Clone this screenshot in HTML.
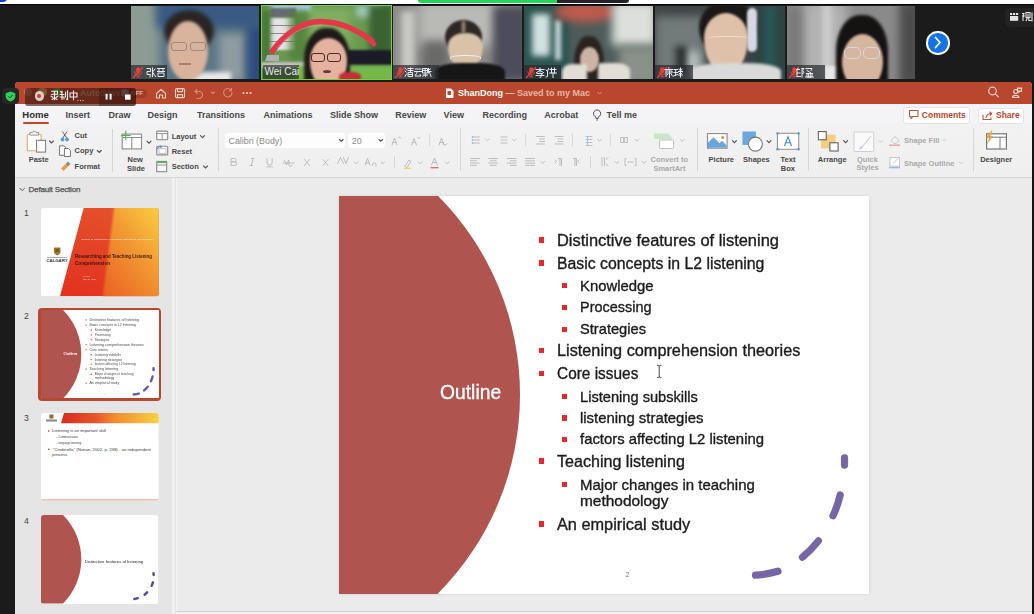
<!DOCTYPE html>
<html><head><meta charset="utf-8">
<style>
*{box-sizing:border-box;margin:0;padding:0}
html,body{width:1034px;height:614px;overflow:hidden;background:#1b1b1b;font-family:"Liberation Sans",sans-serif;position:relative}
.a{position:absolute}
svg{position:absolute;overflow:visible}
.tile{position:absolute;top:5.5px;height:73.5px;overflow:hidden}
.tile .b{position:absolute;border-radius:50%}
.lbl{position:absolute;left:0;bottom:0;height:14px;background:rgba(40,40,40,.75)}
.tab{position:absolute;top:109px;font-size:9px;font-weight:bold;color:#474747;white-space:nowrap;line-height:10px}
.rl{position:absolute;font-size:7.5px;font-weight:bold;color:#484848;white-space:nowrap;line-height:8px}
.rg{color:#a9a9a9}
.sep{position:absolute;width:1px;background:#d6d6d6}
.slide{position:absolute;width:530px;height:398px;background:#fff;overflow:hidden;transform-origin:0 0}
.l1,.l2{position:absolute;white-space:nowrap;color:#1c1c1c;transform-origin:0 0;-webkit-text-stroke:0.35px #1c1c1c}
.l1{font-size:16px;line-height:16px;left:218px}
.l2{font-size:14.5px;line-height:14.5px;left:241px}
#th2 .l1,#th2 .l2{color:#4a4a4a;-webkit-text-stroke:0}
.bl{position:absolute;width:5.4px;height:5.4px;background:#e8262b}
.num{position:absolute;left:24px;font-size:8.6px;color:#444;line-height:9px}
</style></head><body>

<!-- top strip -->
<div class="a" style="left:0;top:0;width:1034px;height:4px;background:#fff"></div>
<div class="a" style="left:0;top:4px;width:1034px;height:1px;background:#050505"></div>
<div class="a" style="left:-3px;top:-3px;width:10px;height:4.5px;background:#0a3fd8;border-radius:0 0 4px 4px"></div>
<div class="a" style="left:417.5px;top:0;width:140px;height:3px;background:#22d65a;border-radius:0 0 0 3px"></div>
<div class="a" style="left:557px;top:0;width:71.5px;height:3px;background:#222326;border-radius:0 0 3px 0"></div>

<!-- video tiles -->
<div class="tile" style="left:130.6px;width:128.6px;top:5.9px;height:72.8px;background:#5c7686">
  <div class="a" style="left:-10px;top:-10px;width:38px;height:95px;background:#8c9c94;filter:blur(4px)"></div>
  <div class="a" style="left:25px;top:-10px;width:115px;height:32px;background:#3a5a84;filter:blur(5px)"></div>
  <div class="a" style="left:88px;top:28px;width:26px;height:48px;background:#8e9ca0;filter:blur(4px)"></div>
  <div class="a" style="left:116px;top:20px;width:20px;height:60px;background:#2c4c7e;filter:blur(4px)"></div>
  <div class="a" style="left:60px;top:66px;width:40px;height:12px;background:#e8e8e8;filter:blur(2px)"></div>
  <div class="b" style="left:33px;top:4px;width:50px;height:42px;background:#2a2522;filter:blur(2px)"></div>
  <div class="b" style="left:37px;top:15px;width:40px;height:60px;background:#d9b39c;filter:blur(1.5px)"></div>
  <div class="a" style="left:40px;top:36px;width:16px;height:9px;border:1.2px solid #9a8a80;border-radius:3px;filter:blur(.4px)"></div>
  <div class="a" style="left:59px;top:36px;width:16px;height:9px;border:1.2px solid #9a8a80;border-radius:3px;filter:blur(.4px)"></div>
  <div class="a" style="left:48px;top:57px;width:12px;height:2.5px;background:#b07a70;filter:blur(.6px)"></div>
</div>
<div class="tile" style="left:261px;width:130.6px;top:5.3px;height:74.3px;background:#5a8a48">
  <div class="a" style="left:0;top:0;width:130px;height:60px;background:#6a9a50;filter:blur(3px)"></div>
  <div class="a" style="left:40px;top:2px;width:50px;height:40px;background:#8ab868;filter:blur(5px);opacity:.7"></div>
  <div class="a" style="left:10px;top:-4px;width:40px;height:10px;background:#a7cdea;filter:blur(2px)"></div>
  <div class="a" style="left:95px;top:0;width:25px;height:12px;background:#b8d8e8;filter:blur(3px);opacity:.7"></div>
  <div class="a" style="left:9px;top:3px;width:26px;height:10px;background:#6a6a72;filter:blur(.8px)"></div>
  <div class="a" style="left:8px;top:13px;width:26px;height:32px;background:#e4e4e4;filter:blur(1.2px)"></div>
  <div class="a" style="left:8px;top:20px;width:26px;height:1.2px;background:#8a8a8a"></div>
  <div class="a" style="left:8px;top:28px;width:26px;height:1.2px;background:#8a8a8a"></div>
  <div class="a" style="left:8px;top:36px;width:26px;height:1.2px;background:#8a8a8a"></div>
  <div class="a" style="left:0;top:5px;width:10px;height:55px;background:#4a7a38;filter:blur(2px)"></div>
  <div class="a" style="left:28px;top:6px;width:20px;height:50px;background:#4f7f3a;filter:blur(3px);opacity:.8"></div>
  <div class="a" style="left:108px;top:0;width:24px;height:50px;background:#3a6232;filter:blur(3px)"></div>
  <div class="a" style="left:86px;top:45px;width:45px;height:15px;background:#1c1c28;filter:blur(.8px)"></div>
  <div class="a" style="left:0;top:57px;width:50px;height:6px;background:#c0c0bc;filter:blur(1px)"></div>
  <div class="a" style="left:35px;top:61px;width:100px;height:14px;background:#74b84a;filter:blur(1.5px)"></div>
  <svg style="left:0;top:0" width="131" height="75"><path d="M10 48C24 28 42 16 60 16.5S96 24 112 37" fill="none" stroke="#e33848" stroke-width="5.5"/><path d="M109 33l5 8" stroke="#e33848" stroke-width="4.5"/><path d="M16 43C30 27 45 20 60 20.5" fill="none" stroke="#f59aa5" stroke-width="0.8" opacity=".6"/><path d="M6 50h12v6H4z" fill="#b0b0b0"/></svg>
  <div class="b" style="left:43px;top:23px;width:46px;height:70px;background:#1f1a17;filter:blur(1.5px);border-radius:45% 45% 10% 10%"></div>
  <div class="b" style="left:49px;top:33px;width:37px;height:50px;background:#e6b2a0;filter:blur(1.2px);border-radius:50% 50% 45% 45%/45% 45% 55% 55%"></div>
  <div class="a" style="left:50px;top:48px;width:14px;height:9px;border:1.6px solid #4a2a25;border-radius:3px"></div>
  <div class="a" style="left:66px;top:48px;width:14px;height:9px;border:1.6px solid #4a2a25;border-radius:3px"></div>
  <div class="a" style="left:62px;top:65px;width:8px;height:3px;background:#6a3a35;border-radius:50%;filter:blur(.5px)"></div>
  <div class="a" style="left:78px;top:67px;width:22px;height:10px;background:#c42e34;filter:blur(1px);border-radius:40% 40% 0 0"></div>
  <div class="a" style="left:0;top:0;width:130.6px;height:74.3px;border:1.6px solid #7fcd3a"></div>
</div>
<div class="tile" style="left:392.6px;width:129.9px;top:5.5px;height:73.5px;background:#8c8c8a">
  <div class="a" style="left:25px;top:-5px;width:80px;height:45px;background:#b9b9b6;filter:blur(6px)"></div>
  <div class="a" style="left:8px;top:5px;width:14px;height:60px;background:#c8c8c4;filter:blur(3px)"></div>
  <div class="a" style="left:30px;top:35px;width:25px;height:38px;background:#6a6a68;filter:blur(4px)"></div>
  <div class="a" style="left:100px;top:0;width:35px;height:75px;background:#4c4c5a;filter:blur(4px)"></div>
  <div class="b" style="left:52px;top:14px;width:37px;height:34px;background:#2e2723;filter:blur(1.2px)"></div>
  <div class="b" style="left:55px;top:27px;width:35px;height:37px;background:#d8c3a8;filter:blur(1.2px);border-radius:45% 45% 50% 50%/35% 35% 65% 65%"></div>
  <div class="a" style="left:69px;top:15px;width:3px;height:12px;background:#a89a8a;filter:blur(1.5px)"></div>
  <div class="a" style="left:57px;top:49px;width:31px;height:6px;border:1.3px solid #f2f0ea;border-radius:45%;border-bottom-color:transparent"></div>
  <div class="a" style="left:42px;top:57px;width:70px;height:25px;background:#161616;filter:blur(1.2px);border-radius:35% 35% 0 0"></div>
</div>
<div class="tile" style="left:523.9px;width:129.3px;top:5.7px;height:73.3px;background:#4e5c5a">
  <div class="a" style="left:-5px;top:-5px;width:50px;height:85px;background:#2c5450;filter:blur(3px)"></div>
  <div class="a" style="left:8px;top:8px;width:18px;height:42px;background:#d2e2e2;filter:blur(3px)"></div>
  <div class="a" style="left:31px;top:14px;width:6px;height:40px;background:#c8d8d8;filter:blur(2px)"></div>
  <div class="a" style="left:30px;top:-4px;width:62px;height:20px;background:#c05a4c;filter:blur(4px);border-radius:50%"></div>
  <div class="a" style="left:88px;top:-5px;width:45px;height:45px;background:#dcdfdb;filter:blur(5px)"></div>
  <div class="a" style="left:95px;top:40px;width:40px;height:40px;background:#8a918a;filter:blur(5px)"></div>
  <div class="b" style="left:50px;top:30px;width:30px;height:60px;background:#2b2320;filter:blur(1.5px);border-radius:45% 45% 5% 5%"></div>
  <div class="b" style="left:56px;top:41px;width:19px;height:25px;background:#cdb3a3;filter:blur(1px)"></div>
  <div class="a" style="left:38px;top:58px;width:25px;height:20px;background:#e2ded6;filter:blur(1.5px);border-radius:40% 10% 0 0"></div>
  <div class="a" style="left:74px;top:57px;width:32px;height:20px;background:#e2ded6;filter:blur(1.5px);border-radius:10% 40% 0 0"></div>
</div>
<div class="tile" style="left:654.6px;width:130.2px;top:5.5px;height:73.5px;background:#3e4444">
  <div class="a" style="left:0;top:10px;width:50px;height:65px;background:#737a7a;filter:blur(5px)"></div>
  <div class="a" style="left:25px;top:45px;width:20px;height:25px;background:#b8c0c0;filter:blur(5px)"></div>
  <div class="a" style="left:20px;top:40px;width:12px;height:30px;background:#2e3232;filter:blur(3px)"></div>
  <div class="a" style="left:98px;top:0;width:35px;height:75px;background:#2c4444;filter:blur(4px)"></div>
  <div class="a" style="left:110px;top:0;width:10px;height:75px;background:#2a5858;filter:blur(3px)"></div>
  <div class="b" style="left:44px;top:-6px;width:58px;height:56px;background:#1b1818;filter:blur(1.5px)"></div>
  <div class="b" style="left:49px;top:7px;width:44px;height:62px;background:#dfc0a8;filter:blur(1.2px);border-radius:50% 50% 50% 50%/40% 40% 60% 60%"></div>
  <div class="a" style="left:92px;top:2px;width:10px;height:44px;background:#d8d8e2;filter:blur(1px);border-radius:5px"></div>
  <div class="a" style="left:53px;top:30px;width:40px;height:5px;border-top:1.2px solid #f0e0c8;border-radius:40%"></div>
  <div class="a" style="left:36px;top:57px;width:90px;height:20px;background:#dadada;filter:blur(1.5px);border-radius:40% 40% 0 0"></div>
</div>
<div class="tile" style="left:786.9px;width:128.6px;top:5.5px;height:73.5px;background:#8a8a8a">
  <div class="a" style="left:15px;top:-5px;width:45px;height:80px;background:#b2b2b2;filter:blur(6px)"></div>
  <div class="a" style="left:0;top:0;width:15px;height:75px;background:#7a7a7a;filter:blur(4px)"></div>
  <div class="a" style="left:112px;top:-5px;width:25px;height:85px;background:#4e4e4e;filter:blur(4px)"></div><div class="a" style="left:36px;top:-5px;width:8px;height:80px;background:#d0d0d0;filter:blur(3px)"></div>
  <div class="a" style="left:38px;top:60px;width:18px;height:16px;background:#e8e8e8;filter:blur(1.5px)"></div>
  <div class="b" style="left:49px;top:9px;width:52px;height:80px;background:#151212;filter:blur(1.5px);border-radius:45% 45% 10% 10%"></div>
  <div class="b" style="left:55px;top:28px;width:41px;height:56px;background:#d6b69f;filter:blur(1.2px)"></div>
  <div class="a" style="left:57px;top:41px;width:17px;height:12px;border:1.3px solid #d8d8dc;border-radius:5px"></div>
  <div class="a" style="left:76px;top:41px;width:17px;height:12px;border:1.3px solid #d8d8dc;border-radius:5px"></div>
</div>
<!-- name labels -->
<div class="a" style="left:130.6px;top:65px;width:36px;height:13.7px;background:rgba(40,42,44,.7)"></div>
<div class="a" style="left:262.5px;top:64.8px;width:36px;height:13.9px;background:rgba(36,36,36,.6)"></div>
<div class="a" style="left:392.6px;top:65px;width:46px;height:14px;background:rgba(40,42,44,.7)"></div>
<div class="a" style="left:523.9px;top:65px;width:37px;height:14px;background:rgba(40,42,44,.7)"></div>
<div class="a" style="left:654.6px;top:65px;width:38.5px;height:14px;background:rgba(40,42,44,.7)"></div>
<div class="a" style="left:786.9px;top:65px;width:38.5px;height:14px;background:rgba(40,42,44,.7)"></div>
<div class="a" style="left:264.5px;top:66.3px;font-size:10px;line-height:11px;color:#e8ecf4;white-space:nowrap">Wei Cai</div>
<svg style="left:0;top:0" width="1034" height="614">
  <g transform="translate(0,0)"><rect x="136.2" y="67.3" width="4" height="6.2" rx="2" fill="#e8403a"/><path d="M134.8 71.5a3.4 3.4 0 0 0 6.8 0M138.2 75v1.8M136.3 76.8h3.8" fill="none" stroke="#e8403a" stroke-width="1"/><path d="M133.5 77.5l9-10" stroke="#e8403a" stroke-width="1.3" stroke-linecap="round"/></g>
  <g transform="translate(262,0)"><rect x="136.2" y="67.3" width="4" height="6.2" rx="2" fill="#e8403a"/><path d="M134.8 71.5a3.4 3.4 0 0 0 6.8 0M138.2 75v1.8M136.3 76.8h3.8" fill="none" stroke="#e8403a" stroke-width="1"/><path d="M133.5 77.5l9-10" stroke="#e8403a" stroke-width="1.3" stroke-linecap="round"/></g>
  <g transform="translate(393,0)"><rect x="136.2" y="67.3" width="4" height="6.2" rx="2" fill="#e8403a"/><path d="M134.8 71.5a3.4 3.4 0 0 0 6.8 0M138.2 75v1.8M136.3 76.8h3.8" fill="none" stroke="#e8403a" stroke-width="1"/><path d="M133.5 77.5l9-10" stroke="#e8403a" stroke-width="1.3" stroke-linecap="round"/></g>
  <g transform="translate(524,0)"><rect x="136.2" y="67.3" width="4" height="6.2" rx="2" fill="#e8403a"/><path d="M134.8 71.5a3.4 3.4 0 0 0 6.8 0M138.2 75v1.8M136.3 76.8h3.8" fill="none" stroke="#e8403a" stroke-width="1"/><path d="M133.5 77.5l9-10" stroke="#e8403a" stroke-width="1.3" stroke-linecap="round"/></g>
  <g transform="translate(656,0)"><rect x="136.2" y="67.3" width="4" height="6.2" rx="2" fill="#e8403a"/><path d="M134.8 71.5a3.4 3.4 0 0 0 6.8 0M138.2 75v1.8M136.3 76.8h3.8" fill="none" stroke="#e8403a" stroke-width="1"/><path d="M133.5 77.5l9-10" stroke="#e8403a" stroke-width="1.3" stroke-linecap="round"/></g>
  <g fill="none" stroke="#e4e8f0" stroke-width="1" stroke-linecap="square">
    <!-- 张晋 -->
    <path d="M147 68.5h3.5v3h-3.5v3h3.5l-.5 2.5M152.5 68v8.5M155 69l-2.5 3 3 4.5"/>
    <path d="M157.5 68.5h7M159 68.5v3M163 68.5v3M157.5 71.5h7M158.5 73h5.5v3.5h-5.5z"/>
    <!-- 潘云默 -->
    <path d="M405.5 68.5l1 1M405 71l1 1M405 76.5l1.5-2.5M408 68.5h5M410.5 68v4M408 70.5h5M408.5 72.5h4v4h-4zM408.5 74.5h4"/>
    <path d="M415.5 69h5.5M414.5 71.5h7.5M417.5 71.5l-2.5 4.5h6l-1-1.5"/>
    <path d="M423 68.5h4.5v4.5h-4.5zM423 70.5h4.5M425.2 68.5v6.5M423 75h4.5M423 76.5l1-1M425.5 76.5l.5-1M428.5 68.5v4.5M428.5 70l2-1M428.5 71.5h2.5M429.5 72l1.5 4.5"/>
    <!-- 李烨 -->
    <path d="M536 69.5h8M540 68v4M540 70.5l-3.5 2M540 70.5l3.5 2M537 73.5h6l-2 1.5v2l-1 .5M536 75.5h8"/>
    <path d="M546 70l1 1M548.5 68.5l-1 3M547.5 71v5.5l-1.5.5M550 69.5h6M551.5 68v5M554.5 68v5M549.5 73h7M553 73v4.5"/>
    <!-- 康琰 -->
    <path d="M668.5 68h.5M665 69.5h7.5M666 69.5v7M667 71h5v2h-5M669.5 71v6.5M667 75l1-1M671 74l1.5 2"/>
    <path d="M674 69.5h3.5M675.7 69.5v6M674 72.5h3.5M673.5 76l4-1.5M679 69l1 1.5M682 69l-1 1.5M680.5 68v3M678.5 71.5h4M679 73l1 1M682 73l-1 1M680.5 72v5M678.5 75h4"/>
    <!-- 邱盈 -->
    <path d="M798 68.5l-1.5 1h3M797 70v6.5M797 73h3M797 76.5h3.5M802 68.5h2l-1.5 2 1.5 2-1.5 1M802 68.5v8.5"/>
    <path d="M806 68.5h6l-1 2M807 70.5l4 2.5M806.5 73.5h6M807 74.5v2.5h5v-2.5M808.6 74.5v2.5M810.3 74.5v2.5M805.5 77h8"/>
  </g>
</svg>

<!-- zoom chevron button -->
<div class="a" style="left:926px;top:31px;width:23.5px;height:23.5px;border-radius:50%;background:#fff"></div>
<div class="a" style="left:928px;top:33px;width:19.5px;height:19.5px;border-radius:50%;background:#1473e6"></div>
<svg style="left:0;top:0" width="1034" height="614"><path d="M935.5 37.5L940 42.5L935.5 47.5" fill="none" stroke="#fff" stroke-width="1.8" stroke-linecap="round" stroke-linejoin="round"/></svg>
<!-- view button top right -->
<div class="a" style="left:1005.4px;top:7.8px;width:40px;height:18.9px;border-radius:5px;background:#232323"></div>
<svg style="left:0;top:0" width="1034" height="614">
  <g fill="#e4e4e4"><rect x="1010" y="13" width="2.2" height="2"/><rect x="1013" y="13" width="2.2" height="2"/><rect x="1016" y="13" width="2.2" height="2"/><rect x="1010" y="16" width="8.2" height="4.8"/></g>
  <g fill="none" stroke="#e4e4e4" stroke-width="1.1"><path d="M1022 13.5h2l-1.5 3M1023 15v6M1024.5 15.5l-1.5 1.5M1026 12.5h4v5h-4zM1028 13.5v4M1027.5 17.5l-1.5 3.5M1028.8 17.5v3h2.5M1032 12.5v9"/></g>
</svg>

<!-- POWERPOINT WINDOW -->
<div class="a" style="left:15px;top:82px;width:1017.2px;height:540px;background:#f4f4f6;border-radius:4px 4px 0 0;overflow:hidden">
  <div class="a" style="left:0;top:0;width:1017.2px;height:22px;background:#b8472e"></div>
  <div class="a" style="left:0;top:41.5px;width:1017.2px;height:54px;background:linear-gradient(#f2f2f3,#efeff0)"></div>
</div>
<div class="a" style="left:1032.2px;top:81px;width:2px;height:533px;background:#141414"></div>

<!-- TITLE BAR CONTENT -->
<div class="a" style="left:458px;top:88px;font-size:9px;font-weight:bold;color:#fff;line-height:10px;white-space:nowrap">ShanDong <span style="color:#e9b5a6">— Saved to my Mac</span></div>
<svg style="left:0;top:0" width="1034" height="614">
  <!-- doc icon -->
  <path d="M446 88.5h5l2.5 2.5v7h-7.5z" fill="#fff"/>
  <path d="M447.5 91h3.5v4h-3.5z" fill="#b8472e"/>
  <!-- title icons -->
  <g fill="none" stroke="#f1d3c8" stroke-width="1.1" stroke-linejoin="round" stroke-linecap="round">
    <path d="M156.5 93.5l4.5-4.2 4.5 4.2v4.5h-3v-3h-3v3h-3z"/>
    <rect x="175.5" y="88.6" width="9" height="9" rx="1.2"/>
    <path d="M177.5 88.6v3h5v-3M177.5 97.6v-3h5v3"/>
  </g>
  <g fill="none" stroke="#d58d77" stroke-width="1.1" stroke-linecap="round">
    <path d="M197 89.5l-2 2 2 2M195 91.5h4a3.5 3.5 0 0 1 0 7h-2"/>
    <path d="M211.5 92l1.5 1.5 1.5-1.5"/>
    <path d="M231 90a4.2 4.2 0 1 0 1 2.5M231.5 88.5v2.2h-2.2"/>
  </g>
  <g fill="#f1d3c8"><circle cx="243.5" cy="93" r="1.1"/><circle cx="247" cy="93" r="1.1"/><circle cx="250.5" cy="93" r="1.1"/></g>
  <g fill="none" stroke="#f3d6cc" stroke-width="1.2" stroke-linecap="round">
    <circle cx="992.5" cy="91" r="3.8"/><path d="M995.3 93.8l3 3"/>
    <circle cx="1015.7" cy="91.5" r="2"/><path d="M1012.5 97.5a3.2 2.2 0 0 1 6.4 0z"/>
    <path d="M1017.5 88.2h4v3h-1.5l-1 1v-1h-1.5z"/>
  </g>
</svg>
<!-- traffic lights / autosave behind overlay -->
<div class="a" style="left:23.5px;top:87.5px;width:8.5px;height:8.5px;border-radius:50%;background:#d46a5a"></div>
<div class="a" style="left:38px;top:87.5px;width:8.5px;height:8.5px;border-radius:50%;background:#e8c050"></div>
<div class="a" style="left:52.5px;top:87.5px;width:8.5px;height:8.5px;border-radius:50%;background:#50c040"></div>
<div class="a" style="left:80px;top:88px;font-size:9px;font-weight:bold;color:#d49a88;line-height:10px">AutoSave</div>
<div class="a" style="left:119.5px;top:88.5px;width:27px;height:9px;border-radius:5px;background:#9c3f2a"></div>
<div class="a" style="left:120.5px;top:89px;width:8px;height:8px;border-radius:50%;background:#d8c2bb"></div>
<div class="a" style="left:131px;top:89.5px;font-size:6px;font-weight:bold;color:#e2b5a8;line-height:7px">OFF</div>
<!-- zoom recording overlay -->
<div class="a" style="left:25.4px;top:88px;width:110.2px;height:18px;border-radius:3px;background:rgba(55,22,14,.62)"></div>
<div class="a" style="left:98.6px;top:88px;width:37px;height:18px;border-radius:0 3px 3px 0;background:rgba(40,15,10,.35)"></div>
<div class="a" style="left:34.5px;top:91px;width:9.5px;height:9.5px;border-radius:50%;background:#d9d0cc"></div>
<div class="a" style="left:37.2px;top:93.7px;width:4.2px;height:4.2px;border-radius:50%;background:#e8322c"></div>
<svg style="left:0;top:0" width="1034" height="614">
  <g fill="none" stroke="#f4eeec" stroke-width="1.1" stroke-linecap="round">
    <path d="M51.5 91.2h6v3h-6M54.5 91.2v8.5M51 96l2 1.5M58 96l-2 1.5M52 99.5l2.5-1.5 2.5 1.5"/>
    <path d="M60.5 91.5l1 1.2M62 91v8.5M60 94.5h4M60 97h4v2M65.5 92v5M67.5 90.8v8.8l-1-.6"/>
    <path d="M73.5 90.7v9M70 93h7v4h-7z"/>
  </g>
  <g fill="#e8e0dd"><circle cx="78" cy="100.5" r=".6"/><circle cx="80.5" cy="100.5" r=".6"/><circle cx="83" cy="100.5" r=".6"/></g>
  <rect x="105.6" y="93.8" width="2" height="5.8" fill="#fff"/><rect x="109.6" y="93.8" width="2" height="5.8" fill="#fff"/>
  <rect x="125" y="94.5" width="5.6" height="5.2" fill="#fff"/>
</svg>
<!-- shield -->
<div class="a" style="left:2.2px;top:88px;width:16.8px;height:16px;border-radius:4px;background:#262626"></div>
<svg style="left:0;top:0" width="1034" height="614">
  <path d="M10.5 91.5l4.8 1.8v3.2c0 2.6-2 4-4.8 5-2.8-1-4.8-2.4-4.8-5v-3.2z" fill="#27d25a"/>
  <path d="M8.3 96.3l1.6 1.6 2.9-3" fill="none" stroke="#1d2a1f" stroke-width="1"/>
</svg>

<!-- TABS -->
<div class="tab" style="left:22.3px;top:109.5px;font-size:9.5px;color:#2e2e2e">Home</div>
<div class="a" style="left:22.8px;top:122px;width:26.2px;height:1.8px;border-radius:1px;background:#c4452b"></div>
<div class="tab" style="left:65.5px;top:109.5px">Insert</div>
<div class="tab" style="left:108.6px;top:109.5px">Draw</div>
<div class="tab" style="left:147.6px;top:109.5px">Design</div>
<div class="tab" style="left:197px;top:109.5px">Transitions</div>
<div class="tab" style="left:263.4px;top:109.5px">Animations</div>
<div class="tab" style="left:330.1px;top:109.5px">Slide Show</div>
<div class="tab" style="left:395.2px;top:109.5px">Review</div>
<div class="tab" style="left:443.6px;top:109.5px">View</div>
<div class="tab" style="left:482.4px;top:109.5px">Recording</div>
<div class="tab" style="left:544.2px;top:109.5px">Acrobat</div>
<div class="tab" style="left:606.6px;top:109.5px">Tell me</div>
<svg style="left:0;top:0" width="1034" height="614">
  <path d="M596 118.5v-1.5a3.6 3.6 0 1 1 2.2 0v1.5z M596.3 120h1.6" fill="none" stroke="#555" stroke-width="1"/>
</svg>
<!-- comments / share -->
<div class="a" style="left:903px;top:107.3px;width:67.4px;height:16.7px;border-radius:3px;background:#fff;border:1px solid #e4e4e4"></div>
<div class="a" style="left:921.8px;top:111px;font-size:8.5px;font-weight:bold;color:#b6452c;line-height:9px">Comments</div>
<div class="a" style="left:978px;top:107.5px;width:46.3px;height:16.5px;border-radius:3px;background:#fff;border:1px solid #e4e4e4"></div>
<div class="a" style="left:996px;top:111px;font-size:8.5px;font-weight:bold;color:#b6452c;line-height:9px">Share</div>
<svg style="left:0;top:0" width="1034" height="614">
  <g fill="none" stroke="#c0553b" stroke-width="1.1" stroke-linejoin="round">
    <path d="M909.5 110.5h8.5v6h-5l-2 2v-2h-1.5z"/>
    <path d="M983 114.5v5h8v-2M986 118c.5-3 2.5-4.5 5.5-4.5M989.5 111.8l2.3 1.7-2 2"/>
  </g>
</svg>

<!-- RIBBON LABELS -->
<div class="rl" style="left:28.7px;top:156px">Paste</div>
<div class="rl" style="left:74.6px;top:132.4px">Cut</div>
<div class="rl" style="left:74.6px;top:147.4px">Copy</div>
<div class="rl" style="left:74.6px;top:162.9px">Format</div>
<div class="rl" style="left:127.5px;top:156.2px">New</div>
<div class="rl" style="left:127px;top:164.6px">Slide</div>
<div class="rl" style="left:171.7px;top:132.6px">Layout</div>
<div class="rl" style="left:171.7px;top:147.8px">Reset</div>
<div class="rl" style="left:171.7px;top:162.9px">Section</div>
<div class="a" style="left:225.2px;top:133.2px;width:120.2px;height:14.6px;border-radius:3px;background:#fdfdfd"></div>
<div class="a" style="left:348.3px;top:133.2px;width:37px;height:14.6px;border-radius:3px;background:#fdfdfd"></div>
<div class="a" style="left:228.5px;top:135.5px;font-size:8.9px;color:#8c8c8c;line-height:10px;white-space:nowrap">Calibri (Body)</div>
<div class="a" style="left:351.8px;top:135.5px;font-size:8.9px;color:#8c8c8c;line-height:10px">20</div>
<div class="rl rg" style="left:650.5px;top:156.3px">Convert to</div>
<div class="rl rg" style="left:653.4px;top:164.8px">SmartArt</div>
<div class="rl" style="left:708.6px;top:156.4px">Picture</div>
<div class="rl" style="left:743.1px;top:156.4px">Shapes</div>
<div class="rl" style="left:780.6px;top:156.4px">Text</div>
<div class="rl" style="left:780.8px;top:164.7px">Box</div>
<div class="rl" style="left:817.8px;top:156.4px">Arrange</div>
<div class="rl rg" style="left:857px;top:156.4px">Quick</div>
<div class="rl rg" style="left:856.5px;top:164.4px">Styles</div>
<div class="rl rg" style="left:904px;top:136.8px">Shape Fill</div>
<div class="rl rg" style="left:904px;top:159.6px">Shape Outline</div>
<div class="rl" style="left:980.2px;top:156.3px">Designer</div>
<svg style="left:0;top:0" width="1034" height="614">
  <!-- Paste -->
  <rect x="27.3" y="134.3" width="13.8" height="16.4" rx="1" fill="#fff" stroke="#e2ad5c" stroke-width="1.1"/>
  <path d="M29.8 137.3v-2.6h2.6a1.9 1.9 0 0 1 3.6 0h2.6v2.6z" fill="#f6f6f6" stroke="#8a8a8a" stroke-width="0.9" transform="translate(0,-2.2)"/>
  <rect x="36.6" y="140.3" width="9" height="11.8" fill="#fff" stroke="#777" stroke-width="1"/>
  <!-- Cut -->
  <g fill="none" stroke="#555" stroke-width="0.9"><path d="M62.5 131.5l4.5 7M67 131.5l-4.5 7"/></g>
  <circle cx="62.5" cy="139.5" r="1.9" fill="#5b9bd5"/><circle cx="67" cy="139.5" r="1.9" fill="#5b9bd5"/>
  <!-- Copy -->
  <path d="M59.6 145.8h4.5l1.5 1.5v8h-6z" fill="#fff" stroke="#666" stroke-width="0.9"/>
  <path d="M64.4 148.5h4l2 2v6h-6z" fill="#fff" stroke="#666" stroke-width="0.9"/>
  <!-- Format painter -->
  <path d="M61 168.5l4.5-4.5 2.5 2.5-4.5 4.5z" fill="#ee9a45"/>
  <path d="M65.5 164l2.5-2.5 2.5 2.5-2.5 2.5z" fill="#8c8c8c"/>
  <!-- New slide -->
  <rect x="122.2" y="134.1" width="19.3" height="14.8" fill="#fff" stroke="#8c8c8c" stroke-width="1.1"/>
  <path d="M122.2 137.5h19.3M131.8 137.5v11.4" stroke="#8c8c8c" stroke-width="1.1"/>
  <path d="M125.7 130.8v9.5M121 135.5h9.5" stroke="#4cb050" stroke-width="1.1"/>
  <!-- Layout / Reset / Section -->
  <rect x="156.7" y="131.1" width="11" height="8.6" rx="1" fill="#f6f6f6" stroke="#8c8c8c" stroke-width="1.1"/>
  <path d="M156.7 133.6h11M162.2 133.6v6.1" stroke="#8c8c8c" stroke-width="0.9"/><rect x="158.3" y="134.8" width="2.8" height="3.4" fill="#fff"/><rect x="163.3" y="134.8" width="2.8" height="3.4" fill="#fff"/>
  <rect x="156.7" y="146.3" width="11" height="8.6" rx="1" fill="#f6f6f6" stroke="#8c8c8c" stroke-width="1.1"/>
  <rect x="159" y="148.8" width="7" height="4.5" fill="#fff" stroke="#aaa" stroke-width="0.7"/><path d="M157.3 149.3a3 3 0 0 1 4-2.6M160.2 145.6l1.3 1.1-1.2 1.2" fill="none" stroke="#4a8ed8" stroke-width="1.1"/>
  <rect x="156.7" y="162.5" width="10" height="9.2" fill="#f6f6f6" stroke="#8c8c8c" stroke-width="1.1"/>
  <path d="M156.2 161.5h11" stroke="#5cb85c" stroke-width="1.3"/>
  <path d="M156.7 165h10" stroke="#8c8c8c" stroke-width="0.9"/>
  <!-- chevrons dark -->
  <g fill="none" stroke="#555" stroke-width="1.15" stroke-linecap="round">
    <path d="M49.5 141l2 2 2-2"/><path d="M97.3 150.5l2 2 2-2"/><path d="M147 141.2l2 2 2-2"/>
    <path d="M200.5 135.6l2 2 2-2"/><path d="M203.5 166l2 2 2-2"/>
    <path d="M732.4 140.6l2 2 2-2"/><path d="M767 140.6l2 2 2-2"/><path d="M843.6 140.6l2 2 2-2"/>
    <path d="M339.5 139.5l1.8 1.8 1.8-1.8"/><path d="M379 139.5l1.8 1.8 1.8-1.8"/>
  </g>
  <!-- font group gray icons -->
  <g fill="none" stroke="#b8b8b8" stroke-width="0.9" stroke-linecap="round">
    <path d="M231.5 158.5h3a1.7 1.7 0 0 1 0 3.4h-3zM231.5 161.9h3.4a1.8 1.8 0 0 1 0 3.6h-3.4z"/>
    <path d="M251.5 158.5h2.5M250 165.5h2.5M253 158.5l-1.5 7"/>
    <path d="M267 158.5v4a2.6 2.6 0 0 0 5.2 0v-4M266.6 166.8h6"/>
    <path d="M283 163h11M284.5 160.5l2 4.5 2-4.5M289 160.5v4.5a1.5 1.5 0 0 0 3 0"/>
    <path d="M304.5 159.5l5 6M309.5 159.5l-5 6"/>
    <path d="M323 159.5l5 6M328 159.5l-5 6"/>
    <path d="M337.5 163.5l3-6 3 6M343.5 157.5l2.5 6 2.5-6"/><path d="M354.5 162l1.8 1.8 1.8-1.8"/>
    <path d="M365 165l2.5-6.5 2.5 6.5M366 163h3M372.5 165.5a1.8 1.8 0 1 1 3.5-1.5v2"/><path d="M381 162l1.8 1.8 1.8-1.8"/>
    <path d="M392 145l2.5-7 2.5 7M393 142.5h3M398.5 138l1 -1.2 1 1.2"/>
    <path d="M411.5 145l2.5-6.5 2.5 6.5M412.5 142.7h3M418 137.5l1 1.2 1-1.2"/>
    <path d="M439 145l2.5-7 2.5 7M440 142.5h3"/>
    <path d="M405 166l4-6 2 1.5-4 6z"/><path d="M418.5 162l1.8 1.8 1.8-1.8"/>
    <path d="M431.5 165l3-7 3 7M432.5 162.5h4"/><path d="M445.5 162l1.8 1.8 1.8-1.8"/>
  </g>
  <path d="M404 168.3h7" stroke="#ecd86a" stroke-width="1.4"/>
  <path d="M430.5 167.7h8" stroke="#e07070" stroke-width="1.4"/>
  <path d="M443 142a2 2 0 1 0 4 1.5" stroke="#d7a0d7" stroke-width="0.9" fill="none"/>
  <!-- paragraph group -->
  <g fill="none" stroke="#b8b8b8" stroke-width="0.9" stroke-linecap="round">
    <path d="M472.5 137h7M472.5 140h7M472.5 143h7"/><path d="M485.5 139l1.8 1.8 1.8-1.8"/>
    <path d="M501 137h6M501 140h6M501 143h6"/><path d="M512.5 139l1.8 1.8 1.8-1.8"/>
    <path d="M536.5 136.5h8M539.5 139h5M539.5 141.5h5M536.5 144h8"/>
    <path d="M555 136.5h8M558 139h5M558 141.5h5M555 144h8"/>
    <path d="M586 136.5h6M586 139.5h6M586 142.5h6M586 145.5h6"/><path d="M597.6 139.5l1.8 1.8 1.8-1.8"/>
    <path d="M621 137.5h2.5v5h-2.5zM625 137.5h2.5v5h-2.5z"/><path d="M635 139.5l1.8 1.8 1.8-1.8"/>
    <path d="M470.5 158.5h9M470.5 160.8h6M470.5 163.1h9M470.5 165.4h6"/>
    <path d="M488.7 158.5h9M490.2 160.8h6M488.7 163.1h9M490.2 165.4h6"/>
    <path d="M507.3 158.5h9M510.3 160.8h6M507.3 163.1h9M510.3 165.4h6"/>
    <path d="M525.5 158.5h9M525.5 160.8h9M525.5 163.1h9M525.5 165.4h9"/><path d="M541 161.5l1.8 1.8 1.8-1.8"/>
    <path d="M555 160l1.5 1.5-1.5 1.5M558.5 158.5h3v7M560 158.5v7"/>
    <path d="M573.5 158.5h3v7M575 158.5v7M579 160l-1.5 1.5 1.5 1.5"/>
    <path d="M602 157.5v8.5M604.5 157.5v8.5M608 157.5l-1.5 2M608 166l-1.5-2"/><path d="M615 161.5l1.8 1.8 1.8-1.8"/>
    <path d="M626 158.5h-1v7h1M635 158.5h1v7h-1M628 162h5"/><path d="M642 161.5l1.8 1.8 1.8-1.8"/>
    <path d="M680.5 139.5l1.8 1.8 1.8-1.8"/>
  </g>
  <path d="M472.5 137h.1M472.5 140h.1M472.5 143h.1" stroke="#7fb1e0" stroke-width="1.6" stroke-linecap="round"/>
  <path d="M587.5 136v10" stroke="#8fbde6" stroke-width="0.8"/>
  <path d="M654 133.5h14l5 5.5h-19z" fill="#cfe3c6"/>
  <rect x="659.5" y="140" width="14" height="8.5" rx="1" fill="#fff" stroke="#b8b8b8" stroke-width="0.9"/>
  <!-- Picture -->
  <rect x="707.5" y="133.6" width="19.6" height="14.6" fill="#fff" stroke="#8c8c8c" stroke-width="1.1"/>
  <path d="M708 147.8v-5l5.5-5.5 6 6 2.5-2.5 4.5 4.5v2.5z" fill="#6aa5de"/>
  <circle cx="722.7" cy="137.6" r="1.5" fill="#f0903a"/>
  <!-- Shapes -->
  <rect x="742.4" y="131.5" width="13.5" height="13.4" fill="#6ea6e0"/>
  <circle cx="755.4" cy="144.1" r="7" fill="#fff" stroke="#777" stroke-width="1.1"/>
  <!-- Text box -->
  <rect x="777.4" y="133.3" width="21.3" height="16" fill="#fff" stroke="#8c8c8c" stroke-width="1"/>
  <path d="M784.5 146l3.5-9.5 3.5 9.5M785.7 142.8h4.6" fill="none" stroke="#3f87d4" stroke-width="1.1"/>
  <g fill="#3f87d4"><rect x="776.5" y="132.4" width="2" height="2"/><rect x="797.6" y="132.4" width="2" height="2"/><rect x="776.5" y="148.3" width="2" height="2"/><rect x="797.6" y="148.3" width="2" height="2"/></g>
  <!-- Arrange -->
  <rect x="821" y="134.7" width="14.6" height="13.8" fill="#f3cd84"/>
  <rect x="818.3" y="131.6" width="7.9" height="8.2" fill="#fff" stroke="#555" stroke-width="1"/>
  <rect x="829.9" y="142.8" width="8.2" height="8.2" fill="#fff" stroke="#555" stroke-width="1"/>
  <!-- Quick styles -->
  <rect x="854" y="132" width="19.8" height="19.5" rx="1" fill="#fafafa" stroke="#cfcfcf" stroke-width="1"/>
  <path d="M871 136l-8 10" stroke="#c8c8c8" stroke-width="1"/><path d="M859 149.5c.5-2.5 2-4 4-3.5 0 2-2 3.5-4 3.5z" fill="#b9d3ee"/>
  <g fill="none" stroke="#c8c8c8" stroke-width="0.9" stroke-linecap="round"><path d="M878.8 140.5l1.8 1.8 1.8-1.8"/><path d="M942 139.2l1.8 1.8 1.8-1.8"/><path d="M959 162l1.8 1.8 1.8-1.8"/></g>
  <!-- shape fill / outline -->
  <path d="M891 140.5l4-4 4 4-3 3h-2z" fill="none" stroke="#c0c0c0" stroke-width="0.9"/>
  <path d="M889 145.2h11" stroke="#e8a0a0" stroke-width="1.4"/>
  <rect x="890" y="157.6" width="9.5" height="8.5" fill="#fff" stroke="#c0c0c0" stroke-width="0.9"/>
  <path d="M893 163.5l5-5" stroke="#9bb9e0" stroke-width="0.9"/>
  <path d="M889 167.6h11" stroke="#9bb9e0" stroke-width="1.4"/>
  <!-- Designer -->
  <rect x="986.6" y="133.8" width="19.8" height="15.2" fill="#fff" stroke="#777" stroke-width="1.2"/>
  <path d="M986.6 137.2h19.8M1000 137.2v11.8" stroke="#777" stroke-width="1"/>
  <path d="M991.5 130.5l-5.5 7h3.3l-2.5 6.8 6.5-8.3h-3.3l2.5-5.5z" fill="#f0a336"/>
</svg>
<div class="sep" style="left:112px;top:129px;height:42.7px"></div>
<div class="sep" style="left:428.8px;top:134px;height:12px"></div>
<div class="sep" style="left:393.8px;top:156px;height:12px"></div>
<div class="sep" style="left:525.1px;top:134px;height:12px"></div>
<div class="sep" style="left:572.3px;top:134px;height:12px"></div>
<div class="sep" style="left:609.7px;top:134px;height:12px"></div>
<div class="sep" style="left:589.9px;top:156px;height:12px"></div>
<svg style="left:0;top:0" width="1034" height="614"><path d="M597.5 92l2 2 2-2" fill="none" stroke="#e0a090" stroke-width="0.9"/></svg>
<div class="sep" style="left:217.6px;top:128.3px;height:43px"></div>
<div class="sep" style="left:459.8px;top:128.3px;height:43px"></div>
<div class="sep" style="left:696.8px;top:128.3px;height:43px"></div>
<div class="sep" style="left:808.3px;top:128.3px;height:43px"></div>
<div class="sep" style="left:972.6px;top:128.3px;height:43px"></div>

<!-- ribbon bottom border -->
<div class="a" style="left:15px;top:176.5px;width:1017px;height:1.5px;background:#d6d6d8"></div>
<!-- left panel -->
<div class="a" style="left:15px;top:178px;width:157.2px;height:436px;background:#e5e5e5"></div>
<div class="a" style="left:172.2px;top:178px;width:3px;height:436px;background:#f1f0f3"></div>
<div class="a" style="left:175.2px;top:178px;width:1.3px;height:436px;background:#e3e3e3"></div>
<!-- left panel content -->
<svg style="left:0;top:0" width="1034" height="614"><path d="M19.6 188l2.6 2.6 2.6-2.6" fill="none" stroke="#555" stroke-width="1"/></svg>
<div class="a" style="left:28.5px;top:185px;font-size:8px;color:#505050;line-height:9px;white-space:nowrap;letter-spacing:-0.17px;-webkit-text-stroke:0.25px #505050">Default Section</div>
<div class="num" style="top:208.8px">1</div>
<div class="num" style="top:311.5px">2</div>
<div class="num" style="top:414.2px">3</div>
<div class="num" style="top:517px">4</div>
<!-- thumb 1 -->
<svg style="left:41px;top:207.8px" width="117.7" height="88.2">
  <defs>
    <linearGradient id="t1a" x1="0" y1="1" x2="0.4" y2="0"><stop offset="0" stop-color="#e3301f"/><stop offset="1" stop-color="#e4502a"/></linearGradient>
    <linearGradient id="t1b" x1="0.1" y1="1" x2="0.9" y2="0"><stop offset="0" stop-color="#ea5f25"/><stop offset="0.55" stop-color="#f29a32"/><stop offset="1" stop-color="#f9d342"/></linearGradient>
    <clipPath id="t1c"><rect width="117.7" height="88.2" rx="2.5"/></clipPath>
    <filter id="t1f" x="-20%" y="-20%" width="140%" height="140%"><feGaussianBlur stdDeviation="1.2"/></filter>
  </defs>
  <g clip-path="url(#t1c)">
    <rect width="117.7" height="88.2" fill="#fff"/>
    <path d="M42.7 0H118V88.2H19z" fill="url(#t1a)"/>
    <path d="M73.7 -5H125V95H61z" fill="url(#t1b)" filter="url(#t1f)"/>
    <path d="M13 39.5h6.5v4.5c0 1.5-1.5 2.8-3.25 3.5-1.75-.7-3.25-2-3.25-3.5z" fill="#a0762c"/>
    <rect x="14.5" y="41" width="3.5" height="3" fill="#6a3a1a" opacity=".6"/>
    <rect x="6" y="49.3" width="20" height=".6" fill="#777"/>
    <text x="5.5" y="54.3" font-family="Liberation Sans" font-size="4.4" font-weight="bold" fill="#333" textLength="21" lengthAdjust="spacingAndGlyphs">CALGARY</text>
    <text x="40.5" y="32.3" font-family="Liberation Sans" font-size="2.4" fill="#fff" opacity=".85" textLength="71" lengthAdjust="spacingAndGlyphs">School of Languages, Linguistics, Literatures and Cultures</text>
    <text x="34" y="50.3" font-family="Liberation Sans" font-size="4.6" font-weight="bold" fill="#2a1008" opacity=".9" textLength="77" lengthAdjust="spacingAndGlyphs">Researching and Teaching Listening</text>
    <text x="34" y="56.6" font-family="Liberation Sans" font-size="4.6" font-weight="bold" fill="#2a1008" opacity=".9" textLength="35" lengthAdjust="spacingAndGlyphs">Comprehension</text>
    <text x="42" y="69" font-family="Liberation Sans" font-size="2" fill="#fff" opacity=".8">Wei Cai</text>
    <text x="42" y="71.5" font-family="Liberation Sans" font-size="2" fill="#fff" opacity=".8">June 20, 2022</text>
  </g>
</svg>
<!-- thumb 2 (selected) -->
<div class="a" style="left:38px;top:307.6px;width:123.2px;height:93.4px;border:3px solid #b9472e;border-radius:4px;background:#fff"></div>
<div class="a" style="left:40.6px;top:310.3px;width:118px;height:88.1px;overflow:hidden;border-radius:1px">
<div class="slide" id="th2" style="left:0;top:0;transform:scale(0.22264)">
  <svg style="left:0;top:0" width="530" height="398"><circle cx="-101" cy="198.7" r="282" fill="#b05450"/></svg>
  <div class="a" style="left:101.3px;top:187px;font-size:19.6px;line-height:19.6px;color:#fff;white-space:nowrap;-webkit-text-stroke:0.3px #fff;transform:scaleX(0.985);transform-origin:0 0">Outline</div>
  <div class="bl" style="left:199.7px;top:41.9px"></div><div class="l1" style="top:37.2px;transform:scaleX(1.027)">Distinctive features of listening</div>
  <div class="bl" style="left:199.7px;top:64.7px"></div><div class="l1" style="top:60.0px;transform:scaleX(0.988)">Basic concepts in L2 listening</div>
  <div class="bl" style="left:222.6px;top:87.4px"></div><div class="l2" style="top:83.0px;transform:scaleX(1.025)">Knowledge</div>
  <div class="bl" style="left:222.6px;top:109.2px"></div><div class="l2" style="top:104.8px;transform:scaleX(0.996)">Processing</div>
  <div class="bl" style="left:222.6px;top:131.0px"></div><div class="l2" style="top:126.6px;transform:scaleX(1.011)">Strategies</div>
  <div class="bl" style="left:199.7px;top:152.5px"></div><div class="l1" style="top:147.9px;transform:scaleX(1.017)">Listening comprehension theories</div>
  <div class="bl" style="left:199.7px;top:175.5px"></div><div class="l1" style="top:170.9px;transform:scaleX(0.963)">Core issues</div>
  <div class="bl" style="left:222.6px;top:198.4px"></div><div class="l2" style="top:194.1px;transform:scaleX(1.009)">Listening subskills</div>
  <div class="bl" style="left:222.6px;top:219.9px"></div><div class="l2" style="top:215.6px;transform:scaleX(1.028)">listening strategies</div>
  <div class="bl" style="left:222.6px;top:241.1px"></div><div class="l2" style="top:236.8px;transform:scaleX(1.025)">factors affecting L2 listening</div>
  <div class="bl" style="left:199.7px;top:262.8px"></div><div class="l1" style="top:258.2px;transform:scaleX(1.005)">Teaching listening</div>
  <div class="bl" style="left:222.6px;top:286.3px"></div><div class="l2" style="top:282.0px;transform:scaleX(1.033)">Major changes in teaching</div>
  <div class="l2" style="top:298.7px;transform:scaleX(1.065)">methodology</div>
  <div class="bl" style="left:199.7px;top:325.6px"></div><div class="l1" style="top:321.0px;transform:scaleX(1.019)">An empirical study</div>
  <div class="a" style="left:286.5px;top:375px;font-size:7px;line-height:8px;color:#777">2</div>
  <svg style="left:0;top:0" width="530" height="398"><g fill="none" stroke="#6a5aa8" stroke-width="11" stroke-linecap="round">
    <path d="M505.5 261.8A103 103 0 0 1 505.5 269.2"/>
    <path d="M501.2 298.9A103 103 0 0 1 494 319.8"/>
    <path d="M479.4 344.9A103 103 0 0 1 463.4 361.2"/>
    <path d="M439 375.3A103 103 0 0 1 416.5 379.2"/>
  </g></svg>
</div>
</div>
<!-- thumb 3 -->
<svg style="left:41px;top:412.7px" width="117.7" height="87.5">
  <defs>
    <linearGradient id="t3a" x1="0" y1="0" x2="1" y2="0"><stop offset="0" stop-color="#d8281e"/><stop offset="0.35" stop-color="#e8552a"/><stop offset="0.55" stop-color="#f08c30"/><stop offset="1" stop-color="#f8d142"/></linearGradient>
    <clipPath id="t3c"><rect width="117.7" height="87.5" rx="2.5"/></clipPath>
  </defs>
  <g clip-path="url(#t3c)">
    <rect width="117.7" height="87.5" fill="#fff"/>
    <path d="M23 0H118V10.2H20z" fill="url(#t3a)"/>
    <rect x="8.5" y="1.5" width="4" height="4" fill="#9a6a2a"/><rect x="5" y="6.5" width="11" height="2" fill="#555" opacity=".7"/>
    <g fill="#e33"><rect x="7" y="17.3" width="1.4" height="1.4"/><rect x="7" y="35.6" width="1.4" height="1.4"/></g>
    <g font-family="Liberation Sans" fill="#3a3a3a">
      <text x="11" y="19.2" font-size="3.4" textLength="54" lengthAdjust="spacingAndGlyphs">Listening is an important skill</text>
      <text x="15" y="25" font-size="2.7" textLength="22" lengthAdjust="spacingAndGlyphs">– Communication</text>
      <text x="15" y="31" font-size="2.7" textLength="25" lengthAdjust="spacingAndGlyphs">– language learning</text>
      <text x="12" y="37.5" font-size="3.4" textLength="98" lengthAdjust="spacingAndGlyphs">“Cinderella” (Nunan, 2002, p. 238) - an independent</text>
      <text x="11" y="43.3" font-size="3.4" textLength="15" lengthAdjust="spacingAndGlyphs">princess</text>
    </g>
    <rect x="0" y="86.3" width="117.7" height="1.2" fill="#f3a07a"/>
  </g>
</svg>
<!-- thumb 4 -->
<div class="a" style="left:40.9px;top:514.9px;width:117.6px;height:88.7px;overflow:hidden;border-radius:2.5px;background:#fff">
  <div class="slide" style="left:0;top:0;transform:scale(0.22264)">
    <svg style="left:0;top:0" width="530" height="398"><circle cx="-101" cy="198.7" r="282" fill="#b05450"/></svg>
    <div class="a" style="left:196px;top:200px;font-size:19.5px;line-height:19.5px;color:#222;white-space:nowrap">Distinctive features of listening</div>
    <svg style="left:0;top:0" width="530" height="398"><g fill="none" stroke="#5548a4" stroke-width="11" stroke-linecap="round">
      <path d="M505.1 261.5A102.5 102.5 0 0 1 505.9 269.7"/>
      <path d="M502.6 302.5A102.5 102.5 0 0 1 497.2 317.9"/>
      <path d="M476.8 347.7A102.5 102.5 0 0 1 465.4 357.8"/>
      <path d="M434.8 373.6A102.5 102.5 0 0 1 419.3 377.3"/>
    </g></svg>
  </div>
</div>

<!-- main area -->
<div class="a" style="left:176.5px;top:178px;width:855.7px;height:432.5px;background:#ebebeb"></div>
<div class="a" style="left:176px;top:610.5px;width:856.2px;height:1.2px;background:#d2d2d2"></div>
<div class="a" style="left:176px;top:611.7px;width:856.2px;height:3px;background:#f0f0f0"></div>

<!-- MAIN SLIDE -->
<div class="a" style="left:339px;top:195.6px;width:530px;height:398px;box-shadow:0 0 3px rgba(0,0,0,.12)"></div>
<div class="slide" id="s2" style="left:339px;top:195.6px">
  <svg style="left:0;top:0" width="530" height="398"><circle cx="-101" cy="198.7" r="282" fill="#b05450"/></svg>
  <div class="a" style="left:101.3px;top:187px;font-size:19.6px;line-height:19.6px;color:#fff;white-space:nowrap;-webkit-text-stroke:0.3px #fff;transform:scaleX(0.985);transform-origin:0 0">Outline</div>
  <div class="bl" style="left:199.7px;top:41.9px"></div><div class="l1" style="top:37.2px;transform:scaleX(1.027)">Distinctive features of listening</div>
  <div class="bl" style="left:199.7px;top:64.7px"></div><div class="l1" style="top:60.0px;transform:scaleX(0.988)">Basic concepts in L2 listening</div>
  <div class="bl" style="left:222.6px;top:87.4px"></div><div class="l2" style="top:83.0px;transform:scaleX(1.025)">Knowledge</div>
  <div class="bl" style="left:222.6px;top:109.2px"></div><div class="l2" style="top:104.8px;transform:scaleX(0.996)">Processing</div>
  <div class="bl" style="left:222.6px;top:131.0px"></div><div class="l2" style="top:126.6px;transform:scaleX(1.011)">Strategies</div>
  <div class="bl" style="left:199.7px;top:152.5px"></div><div class="l1" style="top:147.9px;transform:scaleX(1.017)">Listening comprehension theories</div>
  <div class="bl" style="left:199.7px;top:175.5px"></div><div class="l1" style="top:170.9px;transform:scaleX(0.963)">Core issues</div>
  <div class="bl" style="left:222.6px;top:198.4px"></div><div class="l2" style="top:194.1px;transform:scaleX(1.009)">Listening subskills</div>
  <div class="bl" style="left:222.6px;top:219.9px"></div><div class="l2" style="top:215.6px;transform:scaleX(1.028)">listening strategies</div>
  <div class="bl" style="left:222.6px;top:241.1px"></div><div class="l2" style="top:236.8px;transform:scaleX(1.025)">factors affecting L2 listening</div>
  <div class="bl" style="left:199.7px;top:262.8px"></div><div class="l1" style="top:258.2px;transform:scaleX(1.005)">Teaching listening</div>
  <div class="bl" style="left:222.6px;top:286.3px"></div><div class="l2" style="top:282.0px;transform:scaleX(1.033)">Major changes in teaching</div>
  <div class="l2" style="top:298.7px;transform:scaleX(1.065)">methodology</div>
  <div class="bl" style="left:199.7px;top:325.6px"></div><div class="l1" style="top:321.0px;transform:scaleX(1.019)">An empirical study</div>
  <div class="a" style="left:286.5px;top:375px;font-size:7px;line-height:8px;color:#777">2</div>
  <svg style="left:0;top:0" width="530" height="398"><g fill="none" stroke="#7766a5" stroke-width="7.2" stroke-linecap="round">
    <path d="M505.5 261.8A103 103 0 0 1 505.5 269.2"/>
    <path d="M501.2 298.9A103 103 0 0 1 494 319.8"/>
    <path d="M479.4 344.9A103 103 0 0 1 463.4 361.2"/>
    <path d="M439 375.3A103 103 0 0 1 416.5 379.2"/>
  </g></svg>

  <svg style="left:0;top:0" width="530" height="398"><path d="M318 169.3h1.3l.9.7.9-.7h1.3M320.2 170v11M318 181.6h1.3l.9-.7.9.7h1.3" fill="none" stroke="#333" stroke-width="0.9"/></svg>
</div>

</body></html>
